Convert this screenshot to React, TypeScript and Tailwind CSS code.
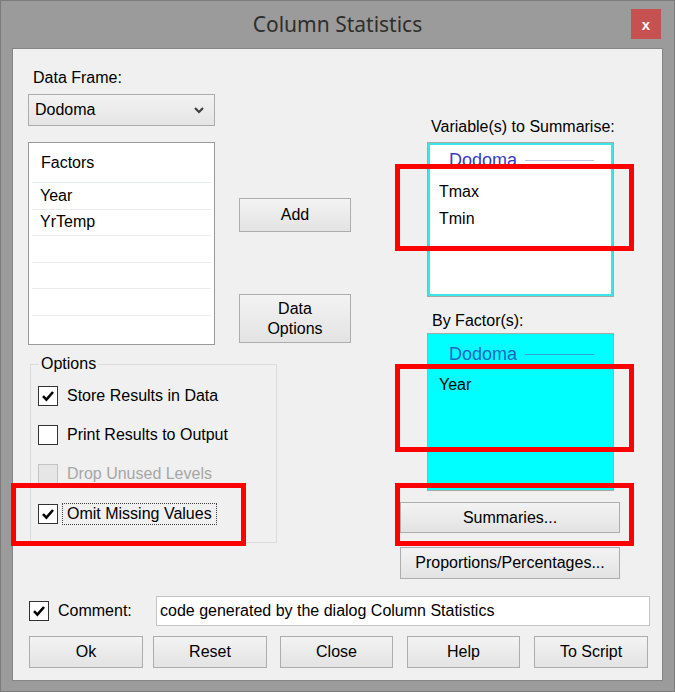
import React from "react";

const Check = ({ checked = false, disabled = false }: { checked?: boolean; disabled?: boolean }) => (
  <div
    className={
      "w-[20px] h-[20px] shrink-0 flex items-center justify-center border " +
      (disabled ? "border-[#c4c4c4] bg-[#e6e6e6]" : "border-[#333333] bg-white")
    }
  >
    {checked && (
      <svg width="14" height="14" viewBox="0 0 14 14">
        <path d="M2 7.2 L5.4 10.6 L12 3" fill="none" stroke="#000" strokeWidth="2.6" />
      </svg>
    )}
  </div>
);

const Btn = ({ children, className = "" }: { children: React.ReactNode; className?: string }) => (
  <button
    className={
      "border border-[#adadad] bg-gradient-to-b from-[#f3f3f3] to-[#e3e3e3] text-[16px] leading-[20px] text-black flex items-center justify-center " +
      className
    }
  >
    {children}
  </button>
);

const GroupHeader = ({ text, textColor, lineColor }: { text: string; textColor: string; lineColor: string }) => (
  <div className="flex items-center pl-[19px] pr-[17px] h-[26px]">
    <span className={"text-[18px] leading-[22px] " + textColor}>{text}</span>
    <div className={"flex-1 h-px ml-[8px] " + lineColor}></div>
  </div>
);

export default function App() {
  return (
    <div className="relative w-[675px] h-[692px] bg-[#9b9b9b] border border-[#7c7c7c] overflow-hidden font-['Liberation_Sans',Arial,sans-serif] text-black">
      {/* title bar */}
      <div className="flex h-[47px] items-start">
        <div className="w-[43px]"></div>
        <div className="flex-1 text-center pt-[9px] text-[21px] leading-[28px] text-[#2e2e2e] font-['Noto_Sans',sans-serif]">
          Column Statistics
        </div>
        <div className="mt-[8px] w-[30px] h-[30px] bg-[#c75050] flex items-center justify-center text-white text-[15px] font-bold leading-none">
          x
        </div>
        <div className="w-[13px]"></div>
      </div>

      {/* client area */}
      <div className="ml-[11px] w-[651px] h-[633px] border border-[#858585] bg-[#f0f0f0] flex flex-col">
        <div className="flex h-[547px]">
          {/* left area */}
          <div className="ml-[15px] w-[323px] pt-[20px]">
            <div className="ml-[5px] h-[17px] text-[16px] leading-[18px]">Data Frame:</div>
            <div className="mt-[8px] w-[187px] h-[32px] border border-[#acacac] bg-gradient-to-b from-[#f2f2f2] to-[#e5e5e5] flex items-center pl-[6px] pr-[10px] text-[16px]">
              <span className="flex-1">Dodoma</span>
              <svg width="10" height="7" viewBox="0 0 10 7">
                <path d="M1 1 L5 5 L9 1" fill="none" stroke="#404040" strokeWidth="2.2" />
              </svg>
            </div>
            <div className="flex mt-[16px]">
              <div className="w-[187px] h-[203px] border border-[#9a9a9a] bg-white flex flex-col px-[3px] pt-px">
                <div className="h-[39px] border-b border-[#e6edf5] flex items-center pl-[9px] text-[16px]">Factors</div>
                {["Year", "YrTemp", "", "", ""].map((t, i) => (
                  <div key={i} className="h-[26.5px] border-b border-[#ececec] flex items-center pl-[8px] text-[16px]">
                    {t}
                  </div>
                ))}
              </div>
              <div className="ml-[24px] w-[112px] flex flex-col">
                <Btn className="mt-[56px] h-[34px]">Add</Btn>
                <Btn className="mt-[62px] h-[49px] flex-col">
                  <span>Data</span>
                  <span>Options</span>
                </Btn>
              </div>
            </div>
            {/* options group */}
            <fieldset className="mt-[10px] ml-[2px] w-[247px] h-[188px] border border-[#dcdcdc] pl-[7px]">
              <legend className="ml-[1px] px-[2px] text-[16px] leading-[18px]">Options</legend>
              <div className="flex flex-col gap-[19px] mt-[13px]">
                <div className="flex items-center">
                  <Check checked />
                  <span className="ml-[9px] text-[16px] leading-[20px]">Store Results in Data</span>
                </div>
                <div className="flex items-center">
                  <Check />
                  <span className="ml-[9px] text-[16px] leading-[20px]">Print Results to Output</span>
                </div>
                <div className="flex items-center">
                  <Check disabled />
                  <span className="ml-[9px] text-[16px] leading-[20px] text-[#a6a6a6]">Drop Unused Levels</span>
                </div>
                <div className="flex items-center">
                  <Check checked />
                  <span className="ml-[4px] px-[4px] h-[22px] border border-dotted border-[#404040] text-[16px] leading-[20px]">
                    Omit Missing Values
                  </span>
                </div>
              </div>
            </fieldset>
          </div>

          {/* right column */}
          <div className="ml-[49px] w-[220px] pt-[69px] flex flex-col">
            <div className="ml-[31px] h-[18px] text-[16px] leading-[18px]">Variable(s) to Summarise:</div>
            <div className="ml-[27px] mt-[6px] w-[187px] h-[155px] border border-[#a8a8a8]">
              <div className="h-full border-2 border-[#3de6e6] bg-white pt-[2px]">
                <GroupHeader text="Dodoma" textColor="text-[#3b3bc4]" lineColor="bg-[#b8c4de]" />
                <div className="pl-[9px] mt-[5px] h-[27px] flex items-center text-[16px]">Tmax</div>
                <div className="pl-[9px] h-[27px] flex items-center text-[16px]">Tmin</div>
              </div>
            </div>
            <div className="ml-[32px] mt-[15px] h-[18px] text-[16px] leading-[18px]">By Factor(s):</div>
            <div className="ml-[27px] mt-[3px] w-[187px] h-[158px] border border-[#a8a8a8]">
              <div className="h-full border-2 border-[#00ffff] bg-[#00ffff] pt-[5px]">
                <GroupHeader text="Dodoma" textColor="text-[#1c64c4]" lineColor="bg-[#2aa6cf]" />
                <div className="pl-[9px] mt-[4px] h-[27px] flex items-center text-[16px]">Year</div>
              </div>
            </div>
            <Btn className="mt-[11px] w-[220px] h-[31px]">Summaries...</Btn>
            <Btn className="mt-[14px] w-[220px] h-[32px]">Proportions/Percentages...</Btn>
          </div>
        </div>

        {/* comment row */}
        <div className="flex items-center h-[30px] pr-[12px]">
          <div className="ml-[16px]">
            <Check checked />
          </div>
          <span className="ml-[9px] text-[16px]">Comment:</span>
          <div className="ml-auto w-[494px] h-[30px] border border-[#c4c4c4] bg-white flex items-center pl-[3px] text-[16px]">
            code generated by the dialog Column Statistics
          </div>
        </div>

        {/* buttons */}
        <div className="flex mt-[10px] h-[32px]">
          <Btn className="ml-[16px] w-[114px]">Ok</Btn>
          <Btn className="ml-[10px] w-[114px]">Reset</Btn>
          <Btn className="ml-[13px] w-[113px]">Close</Btn>
          <Btn className="ml-[14px] w-[113px]">Help</Btn>
          <Btn className="ml-[14px] w-[114px]">To Script</Btn>
        </div>
      </div>

      {/* red highlight annotations */}
      <div className="absolute left-[394px] top-[163px] w-[239px] h-[87px] border-[5px] border-[#ff0000]"></div>
      <div className="absolute left-[394px] top-[363px] w-[239px] h-[88px] border-[5px] border-[#ff0000]"></div>
      <div className="absolute left-[394px] top-[482px] w-[239px] h-[63px] border-[5px] border-[#ff0000]"></div>
      <div className="absolute left-[10px] top-[482px] w-[235px] h-[63px] border-[5px] border-[#ff0000]"></div>
    </div>
  );
}
